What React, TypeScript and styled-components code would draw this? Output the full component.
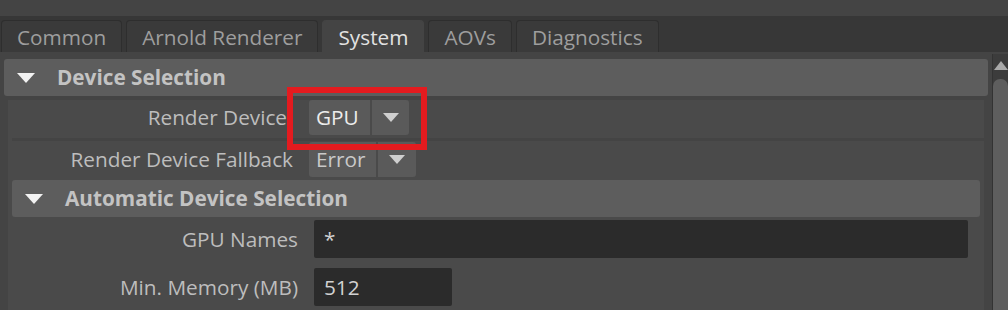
import React from "react";
import styled, { createGlobalStyle } from "styled-components";

const GlobalStyle = createGlobalStyle`
  html, body { margin: 0; padding: 0; background: #444444; }
  body { font-family: "Open Sans", "Noto Sans", sans-serif; }
  * { box-sizing: border-box; }
`;

const Root = styled.div`
  position: relative;
  width: 1008px;
  height: 310px;
  overflow: hidden;
  display: flex;
  flex-direction: column;
  background: #444444;
  font-size: 20.75px;
`;

const TopStrip = styled.div`
  height: 16px;
  background: #444444;
`;

const TabBar = styled.div`
  height: 36px;
  background: #373737;
  display: flex;
  align-items: flex-end;
  gap: 4px;
  padding-left: 1px;
`;

const Tab = styled.div<{ $active?: boolean }>`
  height: 32px;
  padding: 1px 15px 0;
  display: flex;
  align-items: center;
  justify-content: center;
  border-radius: 4px 4px 0 0;
  background: ${(p) => (p.$active ? "#444444" : "#3a3a3a")};
  border: 1px solid ${(p) => (p.$active ? "#444444" : "#2e2e2e")};
  border-bottom: none;
  color: ${(p) => (p.$active ? "#e2e2e2" : "#9e9e9e")};
  white-space: nowrap;
  line-height: 1;
`;

const Body = styled.div`
  flex: 1;
  display: flex;
  min-height: 0;
`;

const Main = styled.div`
  flex: 1;
  padding: 7px 4px 0 4px;
  display: flex;
  flex-direction: column;
`;

const Scrollbar = styled.div`
  width: 16px;
  margin-top: 2px;
  background: #3c3c3c;
  border-left: 1px solid #333333;
  display: flex;
  flex-direction: column;
  align-items: center;
`;

const ScrollArrow = styled.div`
  margin-top: 7px;
  width: 0;
  height: 0;
  border-left: 7px solid transparent;
  border-right: 7px solid transparent;
  border-bottom: 9px solid #a9a9a9;
`;

const ScrollThumb = styled.div`
  margin-top: 9px;
  width: 15px;
  flex: 1;
  background: #5e5e5e;
  border-radius: 7px 7px 0 0;
`;

const FrameHeader = styled.div<{ $indent: number }>`
  height: 37px;
  background: #5d5d5d;
  border-radius: 3px;
  display: flex;
  align-items: center;
  padding-left: ${(p) => p.$indent}px;
  color: #c3c3c3;
  font-weight: 700;
  line-height: 1;
`;

const Caret = styled.span`
  width: 0;
  height: 0;
  border-left: 9.5px solid transparent;
  border-right: 9.5px solid transparent;
  border-top: 10px solid #f2f2f2;
  margin-right: 22px;
`;

const FrameContent = styled.div<{ $mt: number; $mx: number }>`
  margin: ${(p) => p.$mt}px ${(p) => p.$mx}px 0 ${(p) => p.$mx}px;
  background: #4a4a4a;
  display: flex;
  flex-direction: column;
  flex: 1;
`;

const Row = styled.div<{ $height: number; $pt?: number }>`
  position: relative;
  height: ${(p) => p.$height}px;
  padding-top: ${(p) => p.$pt ?? 0}px;
  display: flex;
  align-items: flex-start;
`;

const Separator = styled.div`
  height: 3px;
  margin-left: 4px;
  background: #444444;
`;

const Label = styled.div<{ $width: number; $gap: number }>`
  width: ${(p) => p.$width}px;
  margin-right: ${(p) => p.$gap}px;
  height: 35px;
  display: flex;
  align-items: center;
  justify-content: flex-end;
  color: #bdbdbd;
  white-space: nowrap;
  line-height: 1;
`;

const OptionMenu = styled.div`
  display: flex;
  gap: 2px;
  height: 35px;
`;

const OptionValue = styled.div<{ $width: number; $bright?: boolean }>`
  width: ${(p) => p.$width}px;
  background: #5a5a5a;
  border-radius: 3px 0 0 3px;
  display: flex;
  align-items: center;
  padding-left: 7px;
  color: ${(p) => (p.$bright ? "#ececec" : "#c9c9c9")};
  line-height: 1;
`;

const OptionArrow = styled.div<{ $width: number }>`
  width: ${(p) => p.$width}px;
  background: #5a5a5a;
  border-radius: 0 3px 3px 0;
  display: flex;
  align-items: center;
  justify-content: center;
  &::after {
    content: "";
    width: 0;
    height: 0;
    border-left: 8px solid transparent;
    border-right: 8px solid transparent;
    border-top: 9px solid #cfcfcf;
  }
`;

const Nested = styled.div`
  margin: 0 4px;
  display: flex;
  flex-direction: column;
  flex: 1;
`;

const NestedRows = styled.div`
  display: flex;
  flex-direction: column;
  gap: 10px;
  padding-top: 3px;
`;

const Field = styled.div<{ $width: number }>`
  width: ${(p) => p.$width}px;
  height: 38px;
  background: #2b2b2b;
  border-radius: 2px;
  display: flex;
  align-items: center;
  padding-left: 10px;
  color: #d2d2d2;
  line-height: 1;
`;

const FieldLabel = styled(Label)`
  height: 38px;
`;

const Highlight = styled.div`
  position: absolute;
  left: 287px;
  top: 87px;
  width: 140px;
  height: 63px;
  border: 6px solid #e41b1f;
  pointer-events: none;
`;

export default function App() {
  return (
    <>
      <GlobalStyle />
      <Root>
        <TopStrip />
        <TabBar>
          <Tab>Common</Tab>
          <Tab>Arnold Renderer</Tab>
          <Tab $active>System</Tab>
          <Tab>AOVs</Tab>
          <Tab>Diagnostics</Tab>
        </TabBar>
        <Body>
          <Main>
            <FrameHeader $indent={13}>
              <Caret />
              Device Selection
            </FrameHeader>
            <FrameContent $mt={4} $mx={4}>
              <Row $height={38}>
                <Label $width={279} $gap={22}>Render Device</Label>
                <OptionMenu>
                  <OptionValue $width={61} $bright>GPU</OptionValue>
                  <OptionArrow $width={37} />
                </OptionMenu>
              </Row>
              <Separator />
              <Row $height={39} $pt={1}>
                <Label $width={285} $gap={16}>Render Device Fallback</Label>
                <OptionMenu>
                  <OptionValue $width={67}>Error</OptionValue>
                  <OptionArrow $width={38} />
                </OptionMenu>
              </Row>
              <Nested>
                <FrameHeader $indent={13}>
                  <Caret />
                  Automatic Device Selection
                </FrameHeader>
                <NestedRows>
                  <Row $height={38}>
                    <FieldLabel $width={286} $gap={16}>GPU Names</FieldLabel>
                    <Field $width={654}>*</Field>
                  </Row>
                  <Row $height={38}>
                    <FieldLabel $width={286} $gap={16}>Min. Memory (MB)</FieldLabel>
                    <Field $width={138}>512</Field>
                  </Row>
                </NestedRows>
              </Nested>
            </FrameContent>
          </Main>
          <Scrollbar>
            <ScrollArrow />
            <ScrollThumb />
          </Scrollbar>
        </Body>
        <Highlight />
      </Root>
    </>
  );
}
